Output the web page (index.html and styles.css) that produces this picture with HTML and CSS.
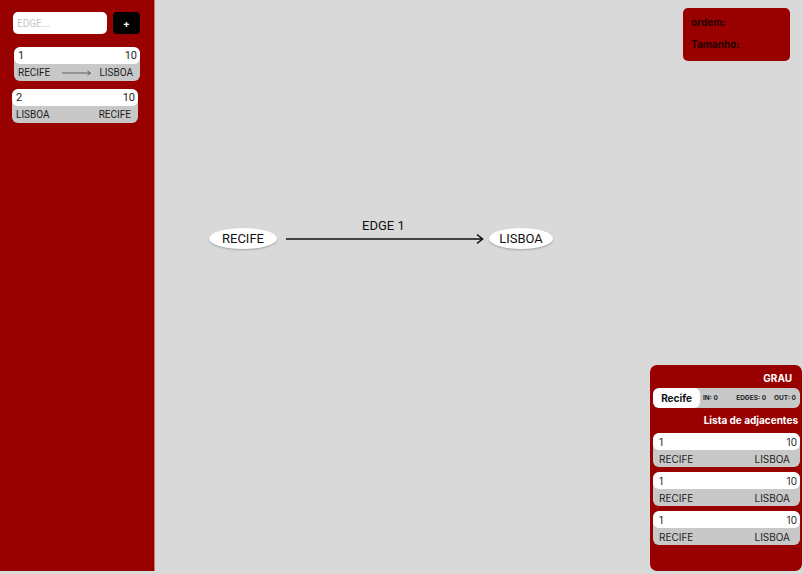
FILE: index.html
```html
<!DOCTYPE html>
<html>
<head>
<meta charset="utf-8">
<link rel="stylesheet" href="styles.css">
</head>
<body>
<div class="app">
  <aside class="sidebar">
    <div class="add-row">
      <input class="edge-input" placeholder="EDGE...">
      <button class="add-btn">+</button>
    </div>
    <div class="edge-card shift">
      <div class="card-top"><span>1</span><span>10</span></div>
      <div class="card-bottom"><span>RECIFE</span><svg class="mini-arrow" width="30" height="6" viewBox="0 0 30 6"><line x1="0" y1="3" x2="28" y2="3" stroke="#444" stroke-width="0.8"/><path d="M25.5 1 L28.5 3 L25.5 5" fill="none" stroke="#444" stroke-width="0.8"/></svg><span>LISBOA</span></div>
    </div>
    <div class="edge-card">
      <div class="card-top"><span>2</span><span>10</span></div>
      <div class="card-bottom"><span>LISBOA</span><span>RECIFE</span></div>
    </div>
  </aside>
  <main class="canvas">
    <div class="node node-recife">RECIFE</div>
    <div class="node node-lisboa">LISBOA</div>
    <div class="edge-label">EDGE 1</div>
    <svg class="edge-line" width="200" height="12" viewBox="0 0 200 12"><line x1="0" y1="6" x2="196" y2="6" stroke="#111" stroke-width="1.6"/><path d="M191 1.5 L196.5 6 L191 10.5" fill="none" stroke="#111" stroke-width="1.6"/></svg>

    <div class="info-box">
      <div>ordem:</div>
      <div>Tamanho:</div>
    </div>

    <div class="grau-panel">
      <div class="panel-title">GRAU</div>
      <div class="grau-row">
        <span class="grau-name">Recife</span>
        <span class="grau-stats"><span class="stat-in">IN: 0</span><span>EDGES: 0</span><span>OUT: 0</span></span>
      </div>
      <div class="panel-title sub">Lista de adjacentes</div>
      <div class="adj-list">
        <div class="edge-card wide">
          <div class="card-top"><span>1</span><span>10</span></div>
          <div class="card-bottom"><span>RECIFE</span><span>LISBOA</span></div>
        </div>
        <div class="edge-card wide">
          <div class="card-top"><span>1</span><span>10</span></div>
          <div class="card-bottom"><span>RECIFE</span><span>LISBOA</span></div>
        </div>
        <div class="edge-card wide">
          <div class="card-top"><span>1</span><span>10</span></div>
          <div class="card-bottom"><span>RECIFE</span><span>LISBOA</span></div>
        </div>
      </div>
    </div>
  </main>
</div>
</body>
</html>
```

FILE: styles.css
```css
* { box-sizing: border-box; }
html, body { margin: 0; padding: 0; }
body {
  background: #d9d9d9;
  font-family: Roboto, "Liberation Sans", sans-serif;
  width: 803px;
  height: 574px;
  overflow: hidden;
}
.app {
  display: flex;
  height: 571px;
}
.sidebar {
  width: 155px;
  background: #990000;
  border-right: 1px solid #c87a7a;
  padding: 12px 12px 0 12px;
  display: flex;
  flex-direction: column;
}
.add-row {
  display: flex;
  gap: 6px;
  margin-left: 1px;
  margin-bottom: 13px;
}
.edge-input {
  width: 94px;
  height: 22px;
  border: none;
  border-radius: 5px;
  background: #fff;
  padding: 0 4px;
  font-family: Roboto, sans-serif;
  font-size: 10px;
  outline: none;
}
.edge-input::placeholder { color: #c4c4c4; }
.add-btn {
  width: 27px;
  height: 22px;
  border: none;
  border-radius: 4px;
  background: #000;
  color: #fff;
  font-family: Inter, sans-serif;
  font-weight: 700;
  font-size: 10px;
  padding: 0;
}
.edge-card {
  width: 126px;
  border-radius: 6px;
  overflow: hidden;
  background: #c8c8c8;
  margin-bottom: 8px;
  color: #1e1e1e;
}
.edge-card.shift { margin-left: 2px; }
.card-top {
  background: #fff;
  height: 17px;
  display: flex;
  justify-content: space-between;
  align-items: center;
  padding: 0 3px 0 4px;
  font-size: 11px;
  border-radius: 6px;
}
.card-bottom {
  height: 17px;
  display: flex;
  justify-content: space-between;
  align-items: center;
  padding: 0 7px 0 4px;
  font-size: 10px;
}
.mini-arrow { margin-left: 4px; }

.canvas {
  flex: 1;
  position: relative;
}
.node {
  position: absolute;
  top: 228px;
  height: 21px;
  background: #fff;
  border-radius: 50%;
  display: flex;
  align-items: center;
  justify-content: center;
  font-size: 13px;
  color: #111;
  box-shadow: 0 1px 2px rgba(0,0,0,0.25);
}
.node-recife { left: 54px; width: 68px; }
.node-lisboa { left: 334px; width: 64px; }
.edge-label {
  position: absolute;
  left: 207px;
  top: 218px;
  font-size: 13px;
  color: #111;
}
.edge-line {
  position: absolute;
  left: 131px;
  top: 233px;
}

.info-box {
  position: absolute;
  left: 528px;
  top: 8px;
  width: 107px;
  height: 53px;
  background: #990000;
  border-radius: 5px;
  padding: 8px 8px;
  font-family: Inter, "Liberation Sans", sans-serif;
  font-weight: 700;
  font-size: 10px;
  color: #220000;
  display: flex;
  flex-direction: column;
  gap: 10px;
}
.grau-panel {
  position: absolute;
  left: 495px;
  top: 365px;
  width: 152px;
  height: 206px;
  background: #990000;
  border-radius: 7px;
  padding: 7px 2px 0 3px;
  font-family: Inter, "Liberation Sans", sans-serif;
}
.panel-title {
  text-align: right;
  color: #fff;
  font-weight: 700;
  font-size: 10px;
  padding-right: 8px;
  height: 16px;
}
.panel-title.sub {
  padding-right: 2px;
  margin-top: 6px;
  height: 19px;
}
.grau-row {
  display: flex;
  height: 20px;
  border-radius: 6px;
  background: #c8c8c8;
  overflow: hidden;
}
.grau-name {
  background: #fff;
  width: 47px;
  border-radius: 6px;
  display: flex;
  align-items: center;
  justify-content: center;
  font-weight: 700;
  font-size: 10px;
  color: #111;
}
.grau-stats {
  flex: 1;
  display: flex;
  align-items: center;
  gap: 8px;
  padding: 0 4px 0 3px;
  font-weight: 700;
  font-size: 6.5px;
  color: #222;
}
.stat-in { margin-right: auto; }
.adj-list {
  display: flex;
  flex-direction: column;
  gap: 5px;
}
.edge-card.wide {
  width: 147px;
  margin-bottom: 0;
}
.edge-card.wide .card-top { padding: 0 3px 0 6px; font-size: 10px; }
.edge-card.wide .card-bottom { padding: 0 10px 0 6px; font-size: 10px; }
```
